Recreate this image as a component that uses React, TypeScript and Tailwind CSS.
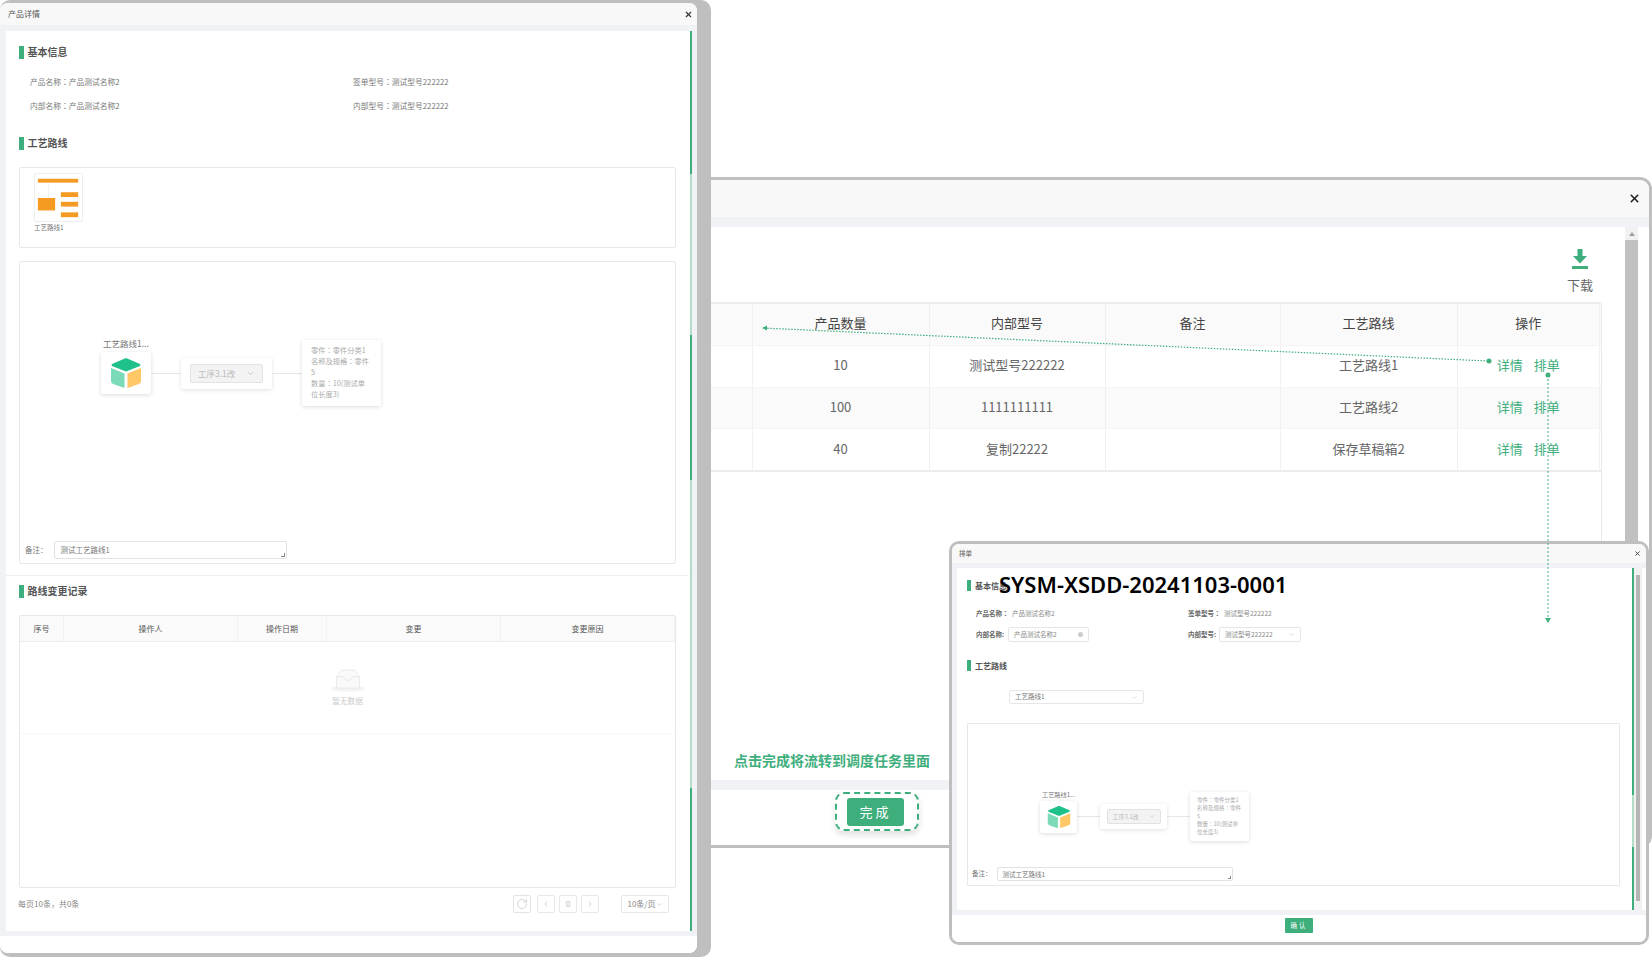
import { ChevronDown, ChevronLeft, ChevronRight, RotateCw, X } from 'lucide-react';

const FONT = "font-['Noto_Sans_CJK_SC','Noto_Sans',sans-serif]";

function Cube({ className }: { className: string }) {
  return (
    <svg viewBox="0 0 32 32" className={className}>
      <path d="M16 1 L30 7 Q31 8 30 9 L16 14.5 L2 9 Q1 8 2 7 Z" fill="#1fc18a" />
      <path d="M1 11 L14.5 16.5 V31 L3 27 Q1 26 1 24 Z" fill="#7adbb6" />
      <path d="M31 11 L17.5 16.5 V31 L29 27 Q31 26 31 24 Z" fill="#ffc766" />
    </svg>
  );
}

// the screenshot's font centres the full-width colon, the TC cut of Noto does too
function Label({ text }: { text: string }) {
  const parts = text.split('：');
  if (parts.length < 2) return <>{text}</>;
  return (
    <>
      {parts[0]}
      <span className="font-['Noto_Sans_CJK_TC']">：</span>
      {parts[1]}
    </>
  );
}

function SectionTitle({ text, small }: { text: string; small?: boolean }) {
  return (
    <div className={small ? 'flex items-center gap-[4px] h-[11px]' : 'flex items-center gap-[3.5px] h-[13px]'}>
      <span className={small ? 'w-[4px] h-[11px] bg-[#3eae7c]' : 'w-[5px] h-[13px] bg-[#3eae7c]'} />
      <span className={small ? 'text-[8px] font-bold text-[#555]' : 'pb-[2px] text-[10px] font-bold text-[#555]'}>{text}</span>
    </div>
  );
}

const infoLines = ['零件：零件分类1', '名称及规格：零件', '5', '数量：10(测试单', '位长度3)'];

function RouteFlow({ small }: { small?: boolean }) {
  if (small) {
    return (
      <div className="flex items-center pl-[72px] mt-[68px]">
        <div className="relative w-[37px] h-[32px] bg-white rounded-[2px] shadow-[0_1px_4px_rgba(0,0,0,0.14)] flex items-center justify-center">
          <span className="absolute bottom-full left-[2px] mb-[1px] text-[6.2px] text-[#777] whitespace-nowrap">工艺路线1...</span>
          <Cube className="w-[24px] h-[24px]" />
        </div>
        <div className="w-[23px] h-px bg-[#e6e6e6]" />
        <div className="w-[67px] h-[25px] bg-white rounded-[2px] shadow-[0_1px_4px_rgba(0,0,0,0.12)] flex items-center justify-center">
          <div className="w-[54px] h-[15px] bg-[#f3f3f3] border border-[#e2e2e2] rounded-[2px] flex items-center justify-between px-[5px] text-[6px] text-[#bbb]">
            工序3.1改
            <ChevronDown className="w-[7px] h-[7px]" />
          </div>
        </div>
        <div className="w-[23px] h-px bg-[#e6e6e6]" />
        <div className="w-[59px] h-[49px] bg-white rounded-[2px] shadow-[0_1px_4px_rgba(0,0,0,0.14)] px-[7px] py-[4px] text-[5.5px] leading-[8.1px] text-[#aaa] whitespace-nowrap">
          {infoLines.map((line) => (
            <div key={line}>
              <Label text={line} />
            </div>
          ))}
        </div>
      </div>
    );
  }
  return (
    <div className="flex items-center pl-[81px] mt-[78px]">
      <div className="relative w-[50px] h-[42px] bg-white rounded-[2px] shadow-[0_1px_4px_rgba(0,0,0,0.14)] flex items-center justify-center">
        <span className="absolute bottom-full left-[2px] mb-[2px] text-[8.5px] text-[#777] whitespace-nowrap">工艺路线1...</span>
        <Cube className="w-[32px] h-[32px]" />
      </div>
      <div className="w-[30px] h-px bg-[#e6e6e6]" />
      <div className="w-[91px] h-[31px] bg-white rounded-[2px] shadow-[0_1px_4px_rgba(0,0,0,0.12)] flex items-center justify-center">
        <div className="w-[73px] h-[19px] bg-[#f3f3f3] border border-[#e2e2e2] rounded-[2px] flex items-center justify-between px-[7px] text-[8.5px] text-[#bbb]">
          工序3.1改
          <ChevronDown className="w-[9px] h-[9px]" />
        </div>
      </div>
      <div className="w-[30px] h-px bg-[#e6e6e6]" />
      <div className="w-[79px] h-[66px] bg-white rounded-[2px] shadow-[0_1px_4px_rgba(0,0,0,0.14)] px-[9px] py-[5px] text-[7.25px] leading-[11px] text-[#aaa] whitespace-nowrap">
        {infoLines.map((line) => (
          <div key={line}>
            <Label text={line} />
          </div>
        ))}
      </div>
    </div>
  );
}

function Thumbnail() {
  return (
    <svg viewBox="0 0 49 49" className="w-[49px] h-[49px] bg-white border border-[#eee] rounded-[2px]">
      <rect x="3" y="5" width="42" height="4" fill="#f59a23" />
      <path d="M14 9 V25" stroke="#e8e8e8" strokeWidth="0.6" />
      <rect x="3" y="25" width="18" height="13" fill="#f59a23" />
      <rect x="27" y="19" width="18" height="5" fill="#f59a23" />
      <rect x="27" y="29" width="18" height="5" fill="#f59a23" />
      <rect x="27" y="40" width="18" height="5" fill="#f59a23" />
    </svg>
  );
}

function LeftWindow() {
  const changeCols = [
    { label: '序号', width: 'w-[44px]' },
    { label: '操作人', width: 'w-[174px]' },
    { label: '操作日期', width: 'w-[89px]' },
    { label: '变更', width: 'w-[174px]' },
    { label: '变更原因', width: 'flex-1' },
  ];

  return (
    <div className="absolute left-0 top-0 w-[711px] h-[957px] bg-[#bfbfbf] rounded-[10px] pt-[3px]">
      <div className="w-[697px] h-[950px] bg-white rounded-[8px] flex flex-col overflow-hidden">
        <div className="h-[22px] shrink-0 bg-[#f8f8f8] flex items-center justify-between pl-[8px] pr-[4px]">
          <span className="text-[8px] text-[#555]">产品详情</span>
          <X className="w-[9px] h-[9px] text-[#333]" strokeWidth={3} />
        </div>
        <div className="flex-1 bg-[#f0f2f5] pl-[6px] pr-[5px] pt-[6px] pb-[5px] flex min-h-0">
          <div className="w-[684px] bg-white pt-[15px] pl-[13px] pr-[14px]">
            <SectionTitle text="基本信息" />
            <div className="mt-[11px] pl-[11px] grid grid-cols-[323px_1fr] text-[7.75px] leading-[24px] text-[#777]">
              <div><Label text="产品名称：产品测试名称2" /></div>
              <div><Label text="签单型号：测试型号222222" /></div>
              <div><Label text="内部名称：产品测试名称2" /></div>
              <div><Label text="内部型号：测试型号222222" /></div>
            </div>
            <div className="mt-[19px]">
              <SectionTitle text="工艺路线" />
            </div>
            <div className="mt-[17px] h-[81px] border border-[#e8e8e8] rounded-[2px] pl-[14px] pt-[5px]">
              <Thumbnail />
              <div className="mt-[1px] text-[6.5px] text-[#777]">工艺路线1</div>
            </div>
            <div className="mt-[13px] h-[303px] border border-[#e8e8e8] rounded-[2px] flex flex-col">
              <RouteFlow />
              <div className="mt-auto mb-[4px] pl-[5px] flex items-center gap-[6px]">
                <span className="text-[7.5px] text-[#777]">备注：</span>
                <div className="relative w-[233px] h-[18px] border border-[#e2e2e2] rounded-[2px] pl-[6px] text-[7.5px] leading-[16px] text-[#777]">
                  测试工艺路线1
                  <span className="absolute right-[1px] bottom-[1px] w-[4px] h-[4px] border-b border-r border-[#888]" />
                </div>
              </div>
            </div>
            <div className="mt-[11px] border-t border-[#f0f0f0] -mx-[13px]" />
            <div className="mt-[9px]">
              <SectionTitle text="路线变更记录" />
            </div>
            <div className="mt-[17px] h-[273px] border border-[#e8e8e8] rounded-[2px]">
              <div className="h-[26px] flex bg-[#fafafa] border-b border-[#eee]">
                {changeCols.map((col) => (
                  <div
                    key={col.label}
                    className={`${col.width} flex items-center justify-center border-r border-[#f2f2f2] text-[8px] text-[#555]`}
                  >
                    {col.label}
                  </div>
                ))}
              </div>
              <div className="h-[92px] border-b border-[#f7f7f7] flex flex-col items-center pt-[27px]">
                <svg viewBox="0 0 36 24" className="w-[36px] h-[23px]">
                  <ellipse cx="18" cy="20.5" rx="17" ry="3" fill="#f3f3f3" />
                  <path d="M6 8 L11 1 H25 L30 8 V19 Q30 20 29 20 H7 Q6 20 6 19 Z" fill="#fafafa" stroke="#e4e4e4" strokeWidth="0.8" />
                  <path d="M6 8 H13 Q14 12 18 12 Q22 12 23 8 H30" fill="none" stroke="#e4e4e4" strokeWidth="0.8" />
                </svg>
                <span className="mt-[3px] text-[7.75px] text-[#ccc]">暂无数据</span>
              </div>
            </div>
            <div className="mt-[7px] h-[18px] pr-[7px] flex items-center text-[8px] text-[#888]">
              <span className="-ml-px">每页10条，共0条</span>
              <div className="ml-auto flex items-center text-[#bbb]">
                <div className="w-[18px] h-[18px] border border-[#e4e4e4] rounded-[2px] flex items-center justify-center">
                  <RotateCw className="w-[12px] h-[12px]" strokeWidth={1.2} />
                </div>
                <div className="ml-[6px] w-[18px] h-[18px] border border-[#e8e8e8] rounded-[2px] flex items-center justify-center">
                  <ChevronLeft className="w-[8px] h-[8px]" />
                </div>
                <div className="ml-[4px] w-[18px] h-[18px] border border-[#e8e8e8] rounded-[2px] flex items-center justify-center">0</div>
                <div className="ml-[4px] w-[18px] h-[18px] border border-[#e8e8e8] rounded-[2px] flex items-center justify-center">
                  <ChevronRight className="w-[8px] h-[8px]" />
                </div>
                <div className="ml-[22px] w-[48px] h-[18px] border border-[#e8e8e8] rounded-[2px] flex items-center justify-center text-[#888]">
                  10条/页
                  <ChevronDown className="w-[7px] h-[7px] text-[#bbb]" />
                </div>
              </div>
            </div>
          </div>
          <div className="w-[2px] flex flex-col">
            <div className="h-[143px] bg-[#3eae7c]" />
            <div className="h-[161px] bg-[#b4dcc9]" />
            <div className="h-[145px] bg-[#3eae7c]" />
            <div className="h-[308px] bg-[#b4dcc9]" />
            <div className="h-[143px] bg-[#3eae7c]" />
          </div>
        </div>
        <div className="h-[17px] shrink-0 bg-white" />
      </div>
    </div>
  );
}

function MiddleWindow() {
  const headers = ['产品数量', '内部型号', '备注', '工艺路线', '操作'];
  const rows = [
    { qty: '10', model: '测试型号222222', route: '工艺路线1', bg: 'bg-white', pad: 'pb-[4px]' },
    { qty: '100', model: '1111111111', route: '工艺路线2', bg: 'bg-[#fafafa]', pad: 'pb-[2px]' },
    { qty: '40', model: '复制22222', route: '保存草稿箱2', bg: 'bg-white', pad: 'pb-[2px]' },
  ];
  const cell = 'flex items-center justify-center border-r border-[#f0f0f0]';
  const grid = 'grid grid-cols-[99.5px_177px_176px_175px_177px_142.5px]';

  return (
    <div className="absolute left-[650px] top-[177px] w-[1002px] h-[671px] border-[3px] border-[#bfbfbf] rounded-[12px] bg-white overflow-hidden flex flex-col">
      <div className="h-[37px] shrink-0 bg-[#f8f8f8] flex items-center justify-end pr-[8px]">
        <X className="w-[13px] h-[13px] text-[#222]" strokeWidth={3} />
      </div>
      <div className="flex-1 bg-[#f0f2f5] pt-[10px] flex flex-col min-h-0">
        <div className="flex-1 flex min-h-0">
          <div className="w-[972px] bg-white pr-[23px] pt-[22px] flex flex-col">
            <div className="ml-auto w-[44px] flex flex-col items-center">
              <svg viewBox="0 0 16 20" className="w-[16px] h-[20px]">
                <path d="M5.5 0 H10.5 V7 H15 L8 14.5 L1 7 H5.5 Z" fill="#3eae7c" />
                <rect x="0" y="17" width="16" height="3" fill="#3eae7c" />
              </svg>
              <span className="mt-[6px] text-[13px] leading-[20px] text-[#666]">下载</span>
            </div>
            <div className="mt-[7px] flex-1 border-r border-[#e8e8e8] flex flex-col">
              <div className="border-t-2 border-b-2 border-[#ececec] rounded-tr-[4px]">
                <div className={`${grid} h-[41px] bg-[#fafafa] text-[13px] text-[#444]`}>
                  <div className={cell} />
                  {headers.map((h) => (
                    <div key={h} className={`${cell} pb-[4px]`}>
                      {h}
                    </div>
                  ))}
                </div>
                {rows.map((row) => (
                  <div key={row.qty} className={`${grid} h-[41.5px] ${row.bg} text-[13px] text-[#666] border-t border-[#f4f4f4]`}>
                    <div className={cell} />
                    <div className={`${cell} ${row.pad}`}>{row.qty}</div>
                    <div className={`${cell} ${row.pad}`}>{row.model}</div>
                    <div className={cell} />
                    <div className={`${cell} ${row.pad}`}>{row.route}</div>
                    <div className={`${cell} ${row.pad} gap-[11px] text-[#3eae7c]`}>
                      <span>详情</span>
                      <span>排单</span>
                    </div>
                  </div>
                ))}
              </div>
              <div className="mt-auto mb-[10px] ml-[81px] text-[14px] leading-[20px] font-bold text-[#3eae7c]">点击完成将流转到调度任务里面</div>
            </div>
          </div>
          <div className="w-[13px] bg-[#f1f1f1] flex flex-col">
            <div className="h-[13px] flex items-center justify-center">
              <span className="w-0 h-0 border-x-[3px] border-x-transparent border-b-[4px] border-b-[#a0a0a0]" />
            </div>
            <div className="flex-1 bg-[#c1c1c1]" />
          </div>
          <div className="flex-1 bg-white" />
        </div>
        <div className="h-[10px] shrink-0" />
        <div className="h-[55px] shrink-0 bg-white pl-[182px] pt-[2px]">
          <div className="w-[84px] h-[39px] border-2 border-dashed border-[#3eae7c] rounded-[9px] shadow-[0_4px_6px_rgba(0,0,0,0.12)] pl-[10px] pt-[4px]">
            <div className="w-[57px] h-[28px] bg-[#3eae7c] rounded-[3px] flex items-center justify-center text-[13px] tracking-[3px] text-white">完成</div>
          </div>
        </div>
      </div>
    </div>
  );
}

function BottomWindow() {
  return (
    <div className="absolute left-[949px] top-[541px] w-[700px] h-[404px] border-[3px] border-[#bfbfbf] rounded-[10px] bg-white overflow-hidden flex flex-col">
      <div className="h-[19px] shrink-0 bg-[#f8f8f8] flex items-center justify-between pl-[7px] pr-[5px]">
        <span className="text-[6.5px] text-[#555]">排单</span>
        <X className="w-[7px] h-[7px] text-[#333]" strokeWidth={3} />
      </div>
      <div className="flex-1 bg-[#f0f2f5] pl-[5px] pt-[5px] pb-[5px] flex min-h-0">
        <div className="relative w-[675px] bg-white pt-[12px] pl-[10px]">
          <SectionTitle text="基本信息" small />
          <span className="absolute left-[42px] top-0 text-[22px] leading-[32px] font-semibold text-black font-['Noto_Sans',sans-serif] whitespace-nowrap">
            SYSM-XSDD-20241103-0001
          </span>
          <div className="mt-[15px] pl-[9px] grid grid-cols-[212px_1fr] text-[6.5px] text-[#888]">
            <div className="h-[16px] flex items-center">
              <span className="w-[36px] font-bold text-[#666]"><Label text="产品名称：" /></span>
              产品测试名称2
            </div>
            <div className="h-[16px] flex items-center">
              <span className="w-[36px] font-bold text-[#666]"><Label text="签单型号：" /></span>
              测试型号222222
            </div>
            <div className="mt-[5px] h-[15px] flex items-center">
              <span className="w-[32px] font-bold text-[#666]">内部名称:</span>
              <div className="w-[81px] h-[15px] border border-[#e6e6e6] rounded-[2px] px-[5px] flex items-center justify-between">
                产品测试名称2
                <span className="w-[5px] h-[5px] rounded-full bg-[#ccc]" />
              </div>
            </div>
            <div className="mt-[5px] h-[15px] flex items-center">
              <span className="w-[31px] font-bold text-[#666]">内部型号:</span>
              <div className="w-[82px] h-[15px] border border-[#e6e6e6] rounded-[2px] px-[5px] flex items-center justify-between">
                测试型号222222
                <ChevronDown className="w-[7px] h-[7px] text-[#ccc]" />
              </div>
            </div>
          </div>
          <div className="mt-[18px]">
            <SectionTitle text="工艺路线" small />
          </div>
          <div className="mt-[19px] ml-[42px] w-[135px] h-[14px] border border-[#e6e6e6] rounded-[2px] px-[5px] flex items-center justify-between text-[6.5px] text-[#777]">
            工艺路线1
            <ChevronDown className="w-[7px] h-[7px] text-[#ccc]" />
          </div>
          <div className="mt-[19px] w-[653px] h-[163px] border border-[#e8e8e8] rounded-[1px] flex flex-col">
            <RouteFlow small />
            <div className="mt-auto mb-[4px] pl-[4px] flex items-center gap-[5px]">
              <span className="text-[6.5px] text-[#777]">备注：</span>
              <div className="relative w-[236px] h-[14px] border border-[#e2e2e2] rounded-[2px] pl-[5px] text-[6.5px] leading-[12px] text-[#777]">
                测试工艺路线1
                <span className="absolute right-[1px] bottom-[1px] w-[3px] h-[3px] border-b border-r border-[#888]" />
              </div>
            </div>
          </div>
        </div>
        <div className="w-[2px] flex flex-col">
          <div className="h-[227px] bg-[#3eae7c]" />
          <div className="h-[52px] bg-[#b4dcc9]" />
          <div className="flex-1 bg-[#3eae7c]" />
        </div>
        <div className="w-[8px] bg-[#f1f1f1] px-[2px] pt-[7px] pb-[9px]">
          <div className="h-full bg-[#b5b5b5]" />
        </div>
        <div className="flex-1 bg-white" />
      </div>
      <div className="h-[27px] shrink-0 bg-white flex justify-center pt-[3px]">
        <div className="w-[28px] h-[15px] bg-[#3eae7c] rounded-[1px] flex items-center justify-center text-[6.5px] tracking-[2px] text-white">确认</div>
      </div>
    </div>
  );
}

export default function App() {
  return (
    <div className={`relative w-[1652px] h-[957px] bg-white overflow-hidden ${FONT}`}>
      <MiddleWindow />
      <LeftWindow />
      <BottomWindow />
      {/* guide arrows drawn over the windows */}
      <svg className="absolute inset-0 pointer-events-none" width="1652" height="957">
        <path d="M1488 361 L767 328.2" stroke="#3eae7c" strokeWidth="1.2" strokeDasharray="1.5 1.5" />
        <circle cx="1489" cy="361" r="2.5" fill="#3eae7c" />
        <path d="M762 328 L767 325.5 V330.5 Z" fill="#3eae7c" />
        <path d="M1548 375 V618" stroke="#3eae7c" strokeWidth="1" strokeDasharray="2 2" />
        <circle cx="1548" cy="375" r="2.5" fill="#3eae7c" />
        <path d="M1545 618 H1551 L1548 623 Z" fill="#3eae7c" />
      </svg>
    </div>
  );
}
